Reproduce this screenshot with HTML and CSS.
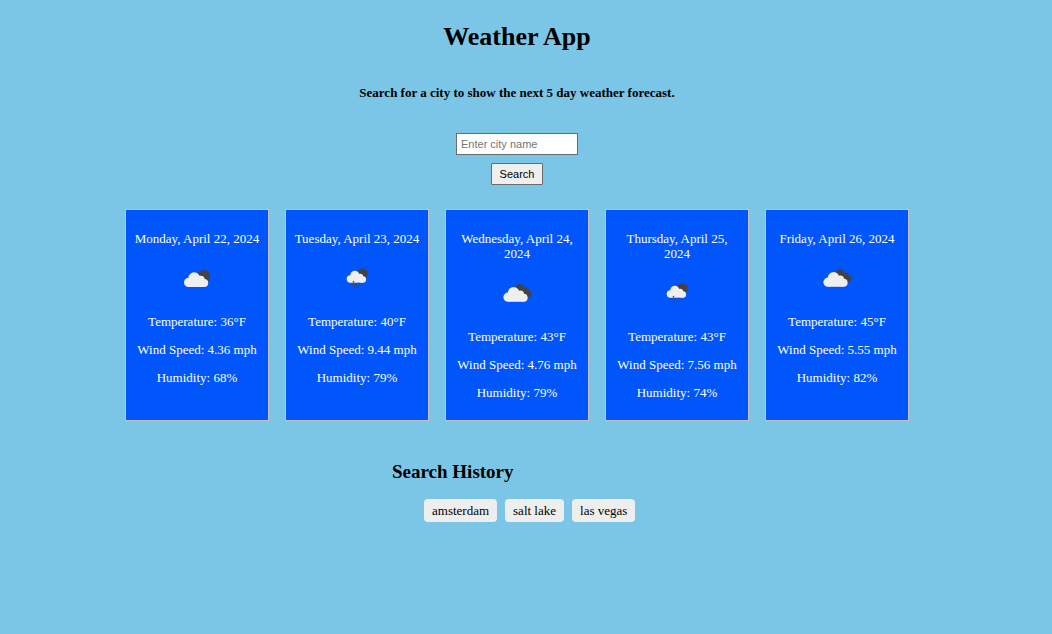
FILE: index.html
```html
<!DOCTYPE html>
<html lang="en">
<head>
<meta charset="utf-8">
<title>Weather App</title>
<link rel="stylesheet" href="styles.css">
</head>
<body>
<svg class="sprite" aria-hidden="true">
  <defs>
    <g id="cloud">
      <circle cx="11.600" cy="23.400" r="4.600"/>
      <circle cx="17.200" cy="19" r="5.800"/>
      <circle cx="23.700" cy="20.700" r="4"/>
      <circle cx="27.200" cy="24" r="4"/>
      <path d="M11.600 20H27.200V28H11.600Z"/>
    </g>
    <symbol id="few" viewBox="0 0 40 40">
      <circle class="dark" cx="26.500" cy="17.500" r="6.600"/>
      <use class="light" href="#cloud"/>
    </symbol>
    <symbol id="broken" viewBox="0 0 40 40">
      <g class="dark">
        <circle cx="23" cy="14.200" r="4.200"/>
        <circle cx="28.500" cy="17" r="3.400"/>
        <circle cx="31.200" cy="19.900" r="3.200"/>
        <path d="M20 16L26 14L31 22.500L26 23Z"/>
      </g>
      <use class="light" href="#cloud" transform="translate(-.6 -.2)"/>
    </symbol>
    <symbol id="rain" viewBox="0 0 40 40">
      <circle class="dark" cx="25.400" cy="14.600" r="5.400"/>
      <use class="light" href="#cloud" transform="translate(4.100 1.300) scale(.8)"/>
      <path class="drops" d="M16.700 22l-.5 1.500M15.400 24.800l-.5 1.300M18.500 24.500l-.5 1.500M22 23.900l-.5 1.500M17.900 27l-.5 1.400M21 27.200l-.5 1.400"/>
    </symbol>
  </defs>
</svg>
<header class="header">
  <h1 class="title">Weather App</h1>
  <h4 class="intro">Search for a city to show the next 5 day weather forecast.</h4>
</header>
<main>
  <form class="search">
    <input class="city" type="text" placeholder="Enter city name" aria-label="City name">
    <button class="submit" type="button">Search</button>
  </form>
  <section class="forecast" aria-label="Five day forecast">
    <article class="card">
      <p class="line">Monday, April 22, 2024</p>
      <svg class="icon" role="img" aria-label="Few clouds"><use href="#few"/></svg>
      <p class="line">Temperature: 36°F</p>
      <p class="line">Wind Speed: 4.36 mph</p>
      <p class="line">Humidity: 68%</p>
    </article>
    <article class="card">
      <p class="line">Tuesday, April 23, 2024</p>
      <svg class="icon" role="img" aria-label="Rain"><use href="#rain"/></svg>
      <p class="line">Temperature: 40°F</p>
      <p class="line">Wind Speed: 9.44 mph</p>
      <p class="line">Humidity: 79%</p>
    </article>
    <article class="card">
      <p class="line">Wednesday, April 24, 2024</p>
      <svg class="icon" role="img" aria-label="Broken clouds"><use href="#broken"/></svg>
      <p class="line">Temperature: 43°F</p>
      <p class="line">Wind Speed: 4.76 mph</p>
      <p class="line">Humidity: 79%</p>
    </article>
    <article class="card">
      <p class="line">Thursday, April 25, 2024</p>
      <svg class="icon" role="img" aria-label="Rain"><use href="#rain"/></svg>
      <p class="line">Temperature: 43°F</p>
      <p class="line">Wind Speed: 7.56 mph</p>
      <p class="line">Humidity: 74%</p>
    </article>
    <article class="card">
      <p class="line">Friday, April 26, 2024</p>
      <svg class="icon" role="img" aria-label="Broken clouds"><use href="#broken"/></svg>
      <p class="line">Temperature: 45°F</p>
      <p class="line">Wind Speed: 5.55 mph</p>
      <p class="line">Humidity: 82%</p>
    </article>
  </section>
  <section class="history">
    <h2 class="history-title">Search History</h2>
    <ul class="history-list">
      <li class="chip">amsterdam</li>
      <li class="chip">salt lake</li>
      <li class="chip">las vegas</li>
    </ul>
  </section>
</main>
</body>
</html>
```
FILE: styles.css
```css
* { box-sizing: border-box; }

body {
  margin: 0;
  padding: 22px 18px 22px 0;
  background: #7bc6e7;
  color: #000;
  font: 13px/15px "Liberation Serif", "Times New Roman", serif;
}

.sprite { display: block; width: 0; height: 0; }
.dark { fill: #434343; }
.light { fill: #efefef; }
.drops { stroke: #434343; stroke-width: 1.3; fill: none; }

.header { text-align: center; }
.title { margin: 0; font-size: 26px; line-height: 30px; }
.intro { margin: 33px 0; font-size: 13px; }

.search {
  display: flex;
  flex-direction: column;
  align-items: center;
  gap: 8px;
}
.city, .submit {
  height: 22px;
  border: 1px solid #6b6b6b;
  font: 11px "Liberation Sans", Arial, sans-serif;
}
.city { width: 122px; padding: 0 4px; background: #fff; }
.city::placeholder { color: #757575; }
.submit {
  padding: 0 8px;
  border-radius: 1px;
  background: #efefef;
  color: #000;
}

.forecast {
  display: flex;
  flex-wrap: wrap;
  justify-content: center;
  gap: 16px;
  margin-top: 24px;
}
.card {
  display: flex;
  flex-direction: column;
  align-items: center;
  gap: 13px;
  width: 144px;
  padding: 21px 8px 20px;
  border: 1px solid #c3c3c3;
  background: #0056fb;
  color: #fff;
  text-align: center;
}
.line { margin: 0; }
.icon { width: 40px; height: 42px; padding-bottom: 2px; }

.history { width: 250px; margin: 39px auto 0; }
.history-title { margin: 0 0 16px; font-size: 19px; line-height: 23px; }
.history-list {
  display: flex;
  gap: 8px;
  margin: 0;
  padding: 0 0 0 32px;
  list-style: none;
}
.chip {
  padding: 4px 8px;
  border-radius: 4px;
  background: #eee;
  white-space: nowrap;
}
```
